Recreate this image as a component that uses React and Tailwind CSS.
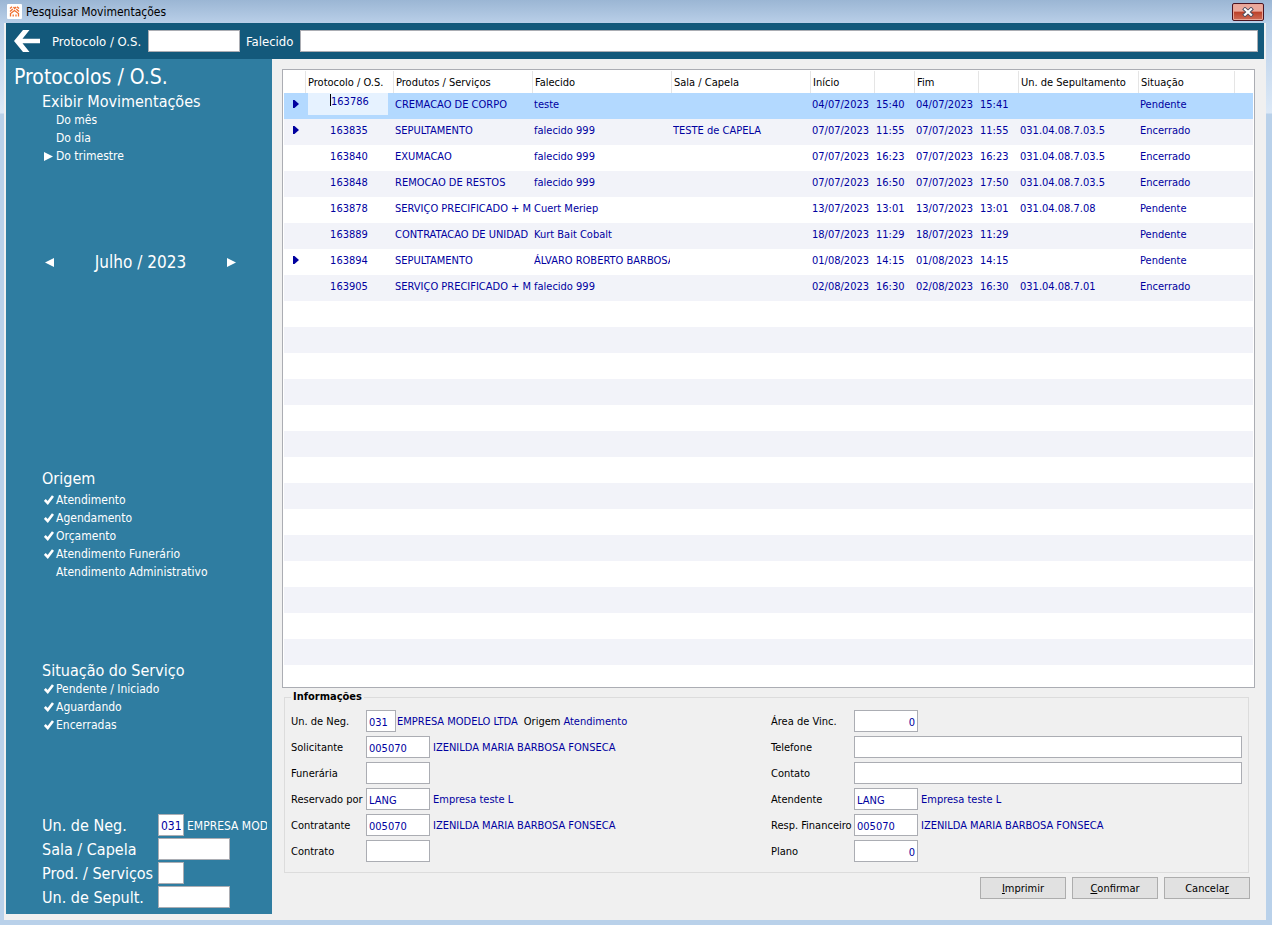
import React, { useState } from 'react';
import clsx from 'clsx';

const columns = [
  { title: '', width: 22 },
  { title: 'Protocolo / O.S.', width: 88 },
  { title: 'Produtos / Serviços', width: 139 },
  { title: 'Falecido', width: 139 },
  { title: 'Sala / Capela', width: 139 },
  { title: 'Início', width: 64 },
  { title: '', width: 40 },
  { title: 'Fim', width: 64 },
  { title: '', width: 40 },
  { title: 'Un. de Sepultamento', width: 120 },
  { title: 'Situação', width: 96 },
  { title: '' },
];

const movements = [
  { marked: true, id: '163786', cells: ['CREMACAO DE CORPO', 'teste', '', '04/07/2023', '15:40', '04/07/2023', '15:41', '', 'Pendente'] },
  { marked: true, id: '163835', cells: ['SEPULTAMENTO', 'falecido 999', 'TESTE de CAPELA', '07/07/2023', '11:55', '07/07/2023', '11:55', '031.04.08.7.03.5', 'Encerrado'] },
  { id: '163840', cells: ['EXUMACAO', 'falecido 999', '', '07/07/2023', '16:23', '07/07/2023', '16:23', '031.04.08.7.03.5', 'Encerrado'] },
  { id: '163848', cells: ['REMOCAO DE RESTOS', 'falecido 999', '', '07/07/2023', '16:50', '07/07/2023', '17:50', '031.04.08.7.03.5', 'Encerrado'] },
  { id: '163878', cells: ['SERVIÇO PRECIFICADO + M', 'Cuert Meriep', '', '13/07/2023', '13:01', '13/07/2023', '13:01', '031.04.08.7.08', 'Pendente'] },
  { id: '163889', cells: ['CONTRATACAO DE UNIDAD', 'Kurt Bait Cobalt', '', '18/07/2023', '11:29', '18/07/2023', '11:29', '', 'Pendente'] },
  { marked: true, id: '163894', cells: ['SEPULTAMENTO', 'ÁLVARO ROBERTO BARBOSA', '', '01/08/2023', '14:15', '01/08/2023', '14:15', '', 'Pendente'] },
  { id: '163905', cells: ['SERVIÇO PRECIFICADO + M', 'falecido 999', '', '02/08/2023', '16:30', '02/08/2023', '16:30', '031.04.08.7.01', 'Encerrado'] },
];

const BLANK_ROWS = 15;

const Triangle = ({ left = false }) => (
  <svg className="h-[9px] w-[9px]" viewBox="0 0 9 9" fill="currentColor">
    <path d={left ? 'M9 0v9L0 4.5z' : 'M0 0v9l9-4.5z'} />
  </svg>
);

const Check = () => (
  <svg className="h-[10px] w-[10px]" viewBox="0 0 10 10" fill="none" stroke="currentColor" strokeWidth="2.6">
    <path d="M.8 5 3.700 8 9 1" />
  </svg>
);

const TextBox = ({ className, ...props }) => (
  <input
    type="text"
    className={clsx('h-[22px] border border-[#abadb3] bg-white px-[2px] pt-[2px] text-[#00009f] outline-none', className)}
    {...props}
  />
);

const TitleBar = () => (
  <div className="flex h-[23px] shrink-0 items-center pr-[2px] pl-[3px]">
    <svg className="h-[15px] w-[15px]" viewBox="0 0 15 15">
      <rect width="15" height="15" rx="1" fill="#fff" />
      <g fill="none" stroke="#f07030" strokeWidth="1.3">
        <path d="M3.500 12.500V9.500L7.500 6.500l4 3v3M6.200 12.500V10.500M9 12.500V10.500" />
        <path d="M3 7.500 5.800 5M3 4.500l2-1.800M6.500 3l1.200 1.500L9 3M12 7.500 9.300 5M12 4.500l-2-1.800" />
      </g>
    </svg>
    <h1 className="ml-[4px] text-[12px] text-black">Pesquisar Movimentações</h1>
    <button
      type="button"
      aria-label="Fechar"
      className="ml-auto flex h-[18px] w-8 items-center justify-center rounded-[2px] border border-[#4d1420] bg-linear-to-b from-[#eba99c] from-45% via-[#bb4028] via-50% to-[#cf6b56] shadow-[inset_0_0_0_1px_#e9a596]"
    >
      <svg className="h-[10px] w-[12px]" viewBox="0 0 12 10" fill="none">
        <path d="M1.500 1l9 8M10.500 1l-9 8" stroke="#4d4f60" strokeWidth="4" />
        <path d="M2.200 1.500l7.600 7M9.800 1.500l-7.600 7" stroke="#fff" strokeWidth="2.200" />
      </svg>
    </button>
  </div>
);

const SearchBar = () => (
  <div className="flex h-9 shrink-0 items-center bg-[#13597b] pr-[6px] pl-2 text-[13px] text-white">
    <button type="button" aria-label="Voltar" className="mr-[12px]">
      <svg className="h-[22px] w-[26px]" viewBox="0 0 26 22" fill="#fff">
        <path d="M9 0h6.500L8.500 8.800H26v4.400H8.500L15.500 22H9L0 11z" />
      </svg>
    </button>
    <label htmlFor="search-protocol" className="w-[96px] pt-[2px] whitespace-nowrap">Protocolo / O.S.</label>
    <TextBox id="search-protocol" className="h-6 w-[92px]" />
    <label htmlFor="search-deceased" className="w-[60px] pt-[2px] pl-[6px]">Falecido</label>
    <TextBox id="search-deceased" className="h-6 min-w-0 flex-1" />
  </div>
);

const CheckItem = ({ label, defaultChecked }) => {
  const [checked, setChecked] = useState(defaultChecked);

  return (
    <label className="flex h-[18px] items-center pl-[38px]">
      <input
        type="checkbox"
        className="sr-only"
        checked={checked}
        onChange={(e) => setChecked(e.target.checked)}
      />
      <span className="w-3">{checked && <Check />}</span>
      {label}
    </label>
  );
};

const PeriodItem = ({ label, value, period, onSelect }) => (
  <label className="flex h-[18px] items-center pl-[38px]">
    <input
      type="radio"
      name="period"
      className="sr-only"
      checked={period === value}
      onChange={() => onSelect(value)}
    />
    <span className="w-3">{period === value && <Triangle />}</span>
    {label}
  </label>
);

const SidebarField = ({ id, label, inputClass, value, children }) => (
  <div className="flex h-6 items-center pl-9">
    <label htmlFor={id} className="w-[116px] shrink-0 pt-[2px] text-[16px] whitespace-nowrap">{label}</label>
    <TextBox id={id} defaultValue={value} className={clsx('shrink-0', inputClass)} />
    {children}
  </div>
);

const Sidebar = () => {
  const [period, setPeriod] = useState('trimestre');

  return (
    <aside className="flex w-[266px] shrink-0 flex-col overflow-hidden bg-[#2f7da1] pt-[3px] pb-[5px] text-[12px] text-white">
      <h2 className="h-[30px] pl-2 text-[21px] leading-[30px]">Protocolos / O.S.</h2>

      <h3 className="h-[19px] pl-9 text-[16px] leading-[19px]">Exibir Movimentações</h3>
      <PeriodItem label="Do mês" value="mes" period={period} onSelect={setPeriod} />
      <PeriodItem label="Do dia" value="dia" period={period} onSelect={setPeriod} />
      <PeriodItem label="Do trimestre" value="trimestre" period={period} onSelect={setPeriod} />

      <div className="mt-[85px] flex h-6 items-center justify-between pr-9 pl-[39px]">
        <button type="button" aria-label="Mês anterior"><Triangle left /></button>
        <span className="text-[17px]">Julho / 2023</span>
        <button type="button" aria-label="Próximo mês"><Triangle /></button>
      </div>

      <h3 className="mt-[194px] h-[23px] pl-9 text-[16px] leading-[22px]">Origem</h3>
      <CheckItem label="Atendimento" defaultChecked />
      <CheckItem label="Agendamento" defaultChecked />
      <CheckItem label="Orçamento" defaultChecked />
      <CheckItem label="Atendimento Funerário" defaultChecked />
      <CheckItem label="Atendimento Administrativo" defaultChecked={false} />

      <h3 className="mt-[79px] h-[20px] pl-9 text-[16px] leading-[22px]">Situação do Serviço</h3>
      <CheckItem label="Pendente / Iniciado" defaultChecked />
      <CheckItem label="Aguardando" defaultChecked />
      <CheckItem label="Encerradas" defaultChecked />

      <div className="mt-auto">
        <SidebarField id="side-unit" label="Un. de Neg." inputClass="w-[26px]" value="031">
          <span className="mr-[5px] ml-[3px] overflow-hidden pt-[2px] whitespace-nowrap">EMPRESA MODELO</span>
        </SidebarField>
        <SidebarField id="side-room" label="Sala / Capela" inputClass="w-[72px]" />
        <SidebarField id="side-product" label="Prod. / Serviços" inputClass="w-[26px]" />
        <SidebarField id="side-burial" label="Un. de Sepult." inputClass="w-[72px]" />
      </div>
    </aside>
  );
};

const MovementRow = ({ movement, index }) => {
  const selected = index === 0;

  return (
    <tr className={clsx('h-[26px]', selected ? 'bg-[#b3d9ff]' : index % 2 ? 'bg-[#f2f3f9]' : 'bg-white')}>
      <td className="pb-1 pl-[9px]">
        {movement?.marked && (
          <svg className="h-[8px] w-[6px]" viewBox="0 0 6 8" fill="#00009f">
            <path d="M0 0h1.500L6 4 1.500 8H0z" />
          </svg>
        )}
      </td>
      {selected ? (
        <td className="pr-[6px] pl-[2px] align-top">
          <div className="flex h-[22px] items-start justify-center bg-[#e6f2ff] pl-[3px]">
            <span className="mt-[1px] h-3 w-px bg-black" />
            <input
              type="text"
              aria-label="Protocolo / O.S."
              defaultValue={movement.id}
              className="h-4 w-[38px] bg-transparent outline-none"
            />
          </div>
        </td>
      ) : (
        <td className="pr-[2px] pb-[2px] text-center">{movement?.id}</td>
      )}
      {columns.slice(2).map((_, i) => (
        <td key={i} className="pr-[2px] pb-[2px] pl-[1px]">
          <div className="overflow-hidden whitespace-nowrap">{movement?.cells[i]}</div>
        </td>
      ))}
    </tr>
  );
};

const MovementsTable = () => (
  <div className="min-h-0 flex-1 overflow-hidden border border-[#abadb3] bg-white p-px">
    <table className="w-full table-fixed border-separate border-spacing-0 text-left text-[#00009f]">
      <colgroup>
        {columns.map((col, i) => (
          <col key={i} style={{ width: col.width }} />
        ))}
      </colgroup>
      <thead>
        <tr className="h-[22px] text-black">
          {columns.map((col, i) => (
            <th
              key={i}
              scope="col"
              className="overflow-hidden border-r border-[#e5e5e5] pt-[2px] pl-[2px] font-normal whitespace-nowrap last:border-r-0"
            >
              {col.title}
            </th>
          ))}
        </tr>
      </thead>
      <tbody>
        {movements.map((movement, i) => (
          <MovementRow key={movement.id} movement={movement} index={i} />
        ))}
        {Array.from({ length: BLANK_ROWS }, (_, i) => (
          <MovementRow key={i} index={movements.length + i} />
        ))}
      </tbody>
    </table>
  </div>
);

const Field = ({ id, label, labelClass = 'w-[75px]', inputClass = 'w-16', value, description, children }) => (
  <div className="flex h-[26px] items-center whitespace-nowrap">
    <label htmlFor={id} className={clsx('shrink-0 pt-[2px]', labelClass)}>{label}</label>
    <TextBox id={id} defaultValue={value} className={inputClass} />
    {description && <span className="ml-[3px] pt-[2px] text-[#00009f]">{description}</span>}
    {children}
  </div>
);

const InfoPanel = () => (
  <fieldset className="mr-[6px] ml-[2px] mt-[2px] border border-[#dcdcdc] pt-1 pr-[6px] pb-2 pl-[6px]">
    <legend className="h-[14px] px-[2px] text-[11px] leading-[14px] font-bold">Informações</legend>
    <div className="grid grid-cols-[480px_1fr]">
      <div>
        <Field id="info-unit" label="Un. de Neg." inputClass="w-[30px]" value="031">
          <span className="ml-[1px] pt-[2px] text-[#00009f]">EMPRESA MODELO LTDA</span>
          <span className="ml-[6px] pt-[2px]">Origem</span>
          <span className="ml-[3px] pt-[2px] text-[#00009f]">Atendimento</span>
        </Field>
        <Field id="info-requester" label="Solicitante" value="005070" description="IZENILDA MARIA BARBOSA FONSECA" />
        <Field id="info-funeral" label="Funerária" />
        <Field id="info-reserved" label="Reservado por" value="LANG" description="Empresa teste L" />
        <Field id="info-contractor" label="Contratante" value="005070" description="IZENILDA MARIA BARBOSA FONSECA" />
        <Field id="info-contract" label="Contrato" />
      </div>
      <div>
        <Field id="info-area" label="Área de Vinc." labelClass="w-[83px]" inputClass="w-16 text-right" value="0" />
        <Field id="info-phone" label="Telefone" labelClass="w-[83px]" inputClass="min-w-0 flex-1" />
        <Field id="info-contact" label="Contato" labelClass="w-[83px]" inputClass="min-w-0 flex-1" />
        <Field id="info-attendant" label="Atendente" labelClass="w-[83px]" value="LANG" description="Empresa teste L" />
        <Field id="info-financial" label="Resp. Financeiro" labelClass="w-[83px]" value="005070" description="IZENILDA MARIA BARBOSA FONSECA" />
        <Field id="info-plan" label="Plano" labelClass="w-[83px]" inputClass="w-16 text-right" value="0" />
      </div>
    </div>
  </fieldset>
);

const ActionButton = ({ children }) => (
  <button type="button" className="h-[22px] w-[86px] border border-[#adadad] bg-[#e1e1e1] pt-px text-black hover:bg-[#e5f1fb]">
    {children}
  </button>
);

export default function App() {
  return (
    <div className="flex h-screen flex-col bg-[#b9d1ea] bg-[linear-gradient(#9bb6d4_0px,#b9cfe8_23px,#dce9f7_113px,#b9d1ea_114px)] pr-[6px] pb-[5px] pl-1 font-['DejaVu_Sans_Condensed','DejaVu_Sans',sans-serif] text-[11px] leading-[14px] text-black">
      <TitleBar />
      <div className="flex min-h-0 flex-1 flex-col bg-[#f0f0f0] px-[2px] pb-[6px]">
        <SearchBar />
        <div className="flex min-h-0 flex-1">
          <Sidebar />
          <main className="flex min-w-0 flex-1 flex-col pt-[10px] pr-[9px] pb-[15px] pl-[10px]">
            <MovementsTable />
            <InfoPanel />
            <div className="mt-1 mr-[5px] flex justify-end gap-[6px]">
              <ActionButton><u>I</u>mprimir</ActionButton>
              <ActionButton><u>C</u>onfirmar</ActionButton>
              <ActionButton>Cancela<u>r</u></ActionButton>
            </div>
          </main>
        </div>
      </div>
    </div>
  );
}
